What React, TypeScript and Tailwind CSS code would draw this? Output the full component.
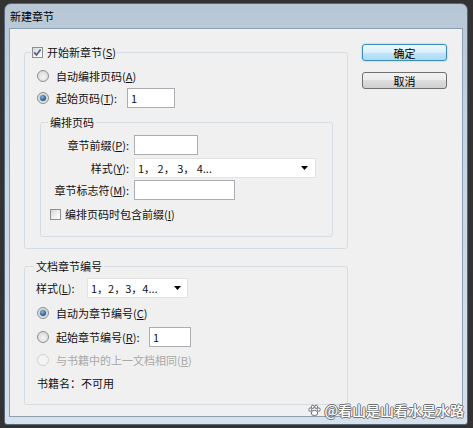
import React from "react";

const Key = ({ k }: { k: string }) => (
  <>
    (<span className="underline underline-offset-[1px]">{k}</span>)
  </>
);

const Radio = ({ checked, disabled }: { checked?: boolean; disabled?: boolean }) =>
  disabled ? (
    <span className="w-[12px] h-[12px] shrink-0 rounded-full border border-[#cfd1d3] bg-[#f4f4f4]" />
  ) : (
    <span className="w-[12px] h-[12px] shrink-0 rounded-full border border-[#8e8f8f] bg-[radial-gradient(circle_at_50%_60%,#f4f4f4_0%,#dcdcdc_70%,#d0d0d0_100%)] flex items-center justify-center">
      {checked && (
        <span className="w-[6px] h-[6px] rounded-full bg-[radial-gradient(circle_at_40%_35%,#8fb8dc_0%,#3b6690_55%,#1d3b5f_100%)] shadow-[0_0_0_1px_#c4d6e6]" />
      )}
    </span>
  );

const Check = ({ checked }: { checked?: boolean }) => (
  <span className="w-[11px] h-[11px] shrink-0 border border-[#8f8f8f] bg-[linear-gradient(135deg,#d6d6d6_0%,#f2f2f2_60%,#ffffff_100%)] flex items-center justify-center">
    {checked && (
      <svg width="9" height="9" viewBox="0 0 9 9">
        <path d="M1.3 4.4 L3.5 7 L7.6 1.4" stroke="#4a5d98" strokeWidth="1.7" fill="none" />
      </svg>
    )}
  </span>
);

const Arrow = () => (
  <svg width="7" height="4" viewBox="0 0 7 4" className="shrink-0">
    <path d="M0 0 L7 0 L3.5 4 Z" fill="#000" />
  </svg>
);

export default function App() {
  return (
    <div className="relative w-[473px] h-[428px] overflow-hidden bg-[#333333] pt-[3px] pl-[4px] font-['Noto_Sans_CJK_SC','Liberation_Sans',sans-serif] text-[11px] leading-[16px] text-[#111]">
      <div className="w-[464px] h-[422px] rounded-t-[7px] rounded-b-[3px] border border-[#56687a] bg-[linear-gradient(180deg,#b7c6d5_0%,#c7d5e2_30%,#d6e1eb_100%)] px-[4px] pb-[7px] flex flex-col">
        <div className="h-[24px] shrink-0 flex items-center pl-[1px] text-black">新建章节</div>
        <div className="flex-1 border border-[#8d9fb0] bg-[#f0f0f0] flex">
          <div className="ml-[14px] flex flex-col">
            {/* Group 1 */}
            <fieldset className="mt-[15px] w-[324px] h-[205px] border border-[#d5dce2] rounded-[3px]">
              <legend className="ml-[6px] px-[1px]">
                <span className="h-[16px] flex items-center gap-[4px]">
                  <Check checked />
                  <span>
                    开始新章节<Key k="S" />
                  </span>
                </span>
              </legend>
              <div className="pt-[8px] pl-[12px] flex flex-col">
                <div className="h-[16px] flex items-center">
                  <Radio />
                  <span className="ml-[7px]">
                    自动编排页码<Key k="A" />
                  </span>
                </div>
                <div className="mt-[4px] h-[20px] flex items-center">
                  <Radio checked />
                  <span className="ml-[7px] w-[71px]">
                    起始页码<Key k="T" />:
                  </span>
                  <div className="w-[48px] h-[20px] border border-[#abadb3] bg-white pl-[3px] flex items-center">1</div>
                </div>
              </div>
              <fieldset className="ml-[15px] mt-[6px] w-[293px] h-[123px] border border-[#d5dce2] rounded-[3px]">
                <legend className="ml-[7px] px-[2px]">
                  <span className="h-[16px] flex items-center">编排页码</span>
                </legend>
                <div className="flex flex-col">
                  <div className="mt-[5px] h-[20px] flex items-center">
                    <span className="w-[93px] text-right pr-[5px]">
                      章节前缀<Key k="P" />:
                    </span>
                    <div className="w-[64px] h-[20px] border border-[#abadb3] bg-white" />
                  </div>
                  <div className="mt-[3px] h-[20px] flex items-center">
                    <span className="w-[93px] text-right pr-[5px]">
                      样式<Key k="Y" />:
                    </span>
                    <div className="w-[182px] h-[20px] border border-[#e2e2e2] bg-white pl-[3px] pr-[7px] flex items-center justify-between">
                      <span>1， 2， 3， 4...</span>
                      <Arrow />
                    </div>
                  </div>
                  <div className="mt-[2px] h-[20px] flex items-center">
                    <span className="w-[93px] text-right pr-[5px]">
                      章节标志符<Key k="M" />:
                    </span>
                    <div className="w-[101px] h-[20px] border border-[#abadb3] bg-white" />
                  </div>
                  <div className="mt-[6px] h-[16px] pl-[9px] flex items-center gap-[4px]">
                    <Check />
                    <span>
                      编排页码时包含前缀<Key k="I" />
                    </span>
                  </div>
                </div>
              </fieldset>
            </fieldset>

            {/* Group 2 */}
            <fieldset className="mt-[9px] w-[324px] h-[147px] border border-[#d5dce2] rounded-[3px]">
              <legend className="ml-[9px] px-[2px]">
                <span className="h-[16px] flex items-center">文档章节编号</span>
              </legend>
              <div className="flex flex-col">
                <div className="mt-[4px] h-[20px] pl-[11px] flex items-center">
                  <span className="w-[51px]">
                    样式<Key k="L" />:
                  </span>
                  <div className="w-[101px] h-[20px] border border-[#e2e2e2] bg-white pl-[3px] pr-[6px] flex items-center justify-between">
                    <span>1，2，3，4...</span>
                    <Arrow />
                  </div>
                </div>
                <div className="mt-[7px] h-[16px] pl-[12px] flex items-center">
                  <Radio checked />
                  <span className="ml-[7px]">
                    自动为章节编号<Key k="C" />
                  </span>
                </div>
                <div className="mt-[6px] h-[20px] pl-[12px] flex items-center">
                  <Radio />
                  <span className="ml-[7px] w-[93px]">
                    起始章节编号<Key k="R" />:
                  </span>
                  <div className="w-[42px] h-[20px] border border-[#abadb3] bg-white pl-[3px] flex items-center">1</div>
                </div>
                <div className="mt-[5px] h-[16px] pl-[12px] flex items-center text-[#a8a8a8]">
                  <Radio disabled />
                  <span className="ml-[7px]">
                    与书籍中的上一文档相同<Key k="B" />
                  </span>
                </div>
                <div className="mt-[7px] h-[16px] pl-[12px] flex items-center">书籍名：不可用</div>
              </div>
            </fieldset>
          </div>

          {/* Buttons */}
          <div className="ml-[14px] mt-[15px] flex flex-col gap-[11px]">
            <button className="w-[85px] h-[17px] rounded-[3px] border border-[#3d8bb3] bg-[linear-gradient(180deg,#eaf6fd_0%,#d9f0fc_50%,#bee6fd_50%,#a9dbf6_100%)] shadow-[0_0_2px_#7cc8ee] flex items-center justify-center text-[11px] leading-[16px] text-black">
              确定
            </button>
            <button className="w-[85px] h-[17px] rounded-[3px] border border-[#707070] bg-[linear-gradient(180deg,#f2f2f2_0%,#ebebeb_50%,#dddddd_50%,#cfcfcf_100%)] flex items-center justify-center text-[11px] leading-[16px] text-black">
              取消
            </button>
          </div>
        </div>
      </div>

      {/* Watermark */}
      <div className="absolute right-[9px] bottom-[10px] flex items-center gap-[3px] text-white text-[14px] leading-[16px] font-medium [text-shadow:-1px_0_#707070,1px_0_#707070,0_-1px_#707070,0_1px_#707070]">
        <svg width="13" height="13" viewBox="0 0 13 13" className="shrink-0">
          <g fill="#fff" stroke="#707070" strokeWidth="1">
            <ellipse cx="6.5" cy="9" rx="3.2" ry="2.6" />
            <ellipse cx="2.2" cy="5.6" rx="1.4" ry="1.7" />
            <ellipse cx="4.8" cy="2.8" rx="1.4" ry="1.7" />
            <ellipse cx="8.2" cy="2.8" rx="1.4" ry="1.7" />
            <ellipse cx="10.8" cy="5.6" rx="1.4" ry="1.7" />
          </g>
        </svg>
        <span>@看山是山看水是水路</span>
      </div>
    </div>
  );
}
